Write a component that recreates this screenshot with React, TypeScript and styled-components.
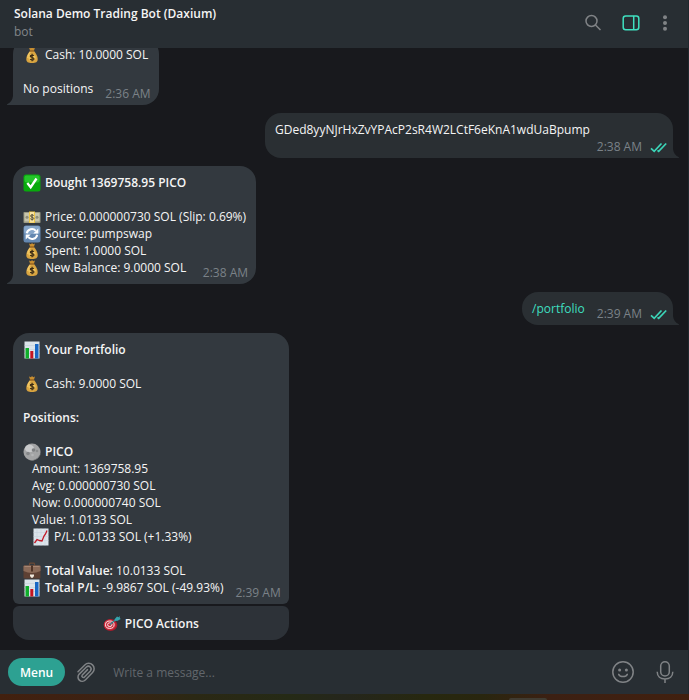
import React, { ReactNode } from 'react';
import styled, { createGlobalStyle, css } from 'styled-components';

const Global = createGlobalStyle`
  *, *::before, *::after { box-sizing: border-box; }
  body {
    margin: 0;
    background: #18191d;
    color: #f5f5f5;
    font: 12px/17px "Open Sans", "Noto Sans", sans-serif;
  }
  button, input { font: inherit; }
`;

const Desktop = styled.div`
  display: flex;
  flex-direction: column;
  height: 100vh;
  overflow: hidden;
`;

const Window = styled.main`
  display: flex;
  flex: 1;
  flex-direction: column;
  min-height: 0;
  border-right: 1px solid #20282e;
`;

const Header = styled.header`
  display: flex;
  flex: none;
  align-items: center;
  justify-content: space-between;
  height: 48px;
  padding: 0 12px 2px 14px;
  background: #282e33;
`;

const Title = styled.h1`
  margin: 0;
  font-size: 12px;
  line-height: 18px;
  font-weight: 600;
`;

const Subtitle = styled.p`
  margin: 0;
  line-height: 18px;
  color: #82868a;
`;

const Tools = styled.div`
  display: flex;
  align-items: center;
  gap: 8px;
`;

const IconButton = styled.button<{ $wide?: boolean; $accent?: boolean }>`
  display: flex;
  flex: none;
  align-items: center;
  justify-content: center;
  width: ${(p) => (p.$wide ? 30 : 22)}px;
  height: 30px;
  padding: 0;
  border: 0;
  background: none;
  color: ${(p) => (p.$accent ? '#3fe0c0' : '#808386')};
  cursor: pointer;
`;

const Chat = styled.section`
  display: flex;
  flex: 1;
  flex-direction: column;
  justify-content: flex-end;
  gap: 8px;
  min-height: 0;
  padding: 0 15px 10px 13px;
  overflow: hidden;
`;

const Bubble = styled.article<{ $own?: boolean; $joined?: boolean }>`
  position: relative;
  flex: none;
  align-self: ${(p) => (p.$own ? 'flex-end' : 'flex-start')};
  padding: 8px ${(p) => (p.$own ? 6 : 10)}px 8px 10px;
  background: ${(p) => (p.$own ? '#2a2f33' : '#33393f')};
  border-radius: ${(p) =>
    p.$joined ? '16px 16px 6px 6px' : p.$own ? '16px 16px 0 16px' : '16px 16px 16px 0'};
`;

const HashBubble = styled(Bubble)`
  min-width: 408px;
`;

const Tail = styled.svg<{ $own?: boolean }>`
  position: absolute;
  bottom: 0;
  ${(p) => (p.$own ? css`left: 100%; transform: scaleX(-1);` : css`right: 100%;`)}
  fill: ${(p) => (p.$own ? '#2a2f33' : '#33393f')};
`;

const Line = styled.div<{ $indent?: boolean; $bold?: boolean }>`
  display: flex;
  align-items: center;
  height: 17px;
  padding-left: ${(p) => (p.$indent ? 9 : 0)}px;
  font-weight: ${(p) => (p.$bold ? 600 : 400)};
  white-space: pre;
`;

const LastLine = styled.div`
  display: flex;
  align-items: flex-end;
  justify-content: space-between;
  gap: 12px;
`;

const Stamp = styled.span<{ $own?: boolean }>`
  display: flex;
  align-items: center;
  gap: 8px;
  height: 17px;
  margin: 0 ${(p) => (p.$own ? 0 : -2)}px -5px auto;
  color: #7b8288;
  white-space: nowrap;
`;

const Command = styled.a`
  color: #3fdfc0;
  text-decoration: none;
`;

const EmojiBox = styled.svg`
  flex: none;
  width: 18px;
  height: 18px;
  margin-right: 4px;
`;

const Card = styled.div`
  display: flex;
  flex: none;
  flex-direction: column;
  align-self: flex-start;
  gap: 2px;
`;

const WideBubble = styled(Bubble)`
  align-self: stretch;
`;

const ActionButton = styled.button`
  display: flex;
  align-items: center;
  justify-content: center;
  height: 34px;
  padding: 0;
  border: 0;
  border-radius: 6px 6px 16px 16px;
  background: #2d3238;
  color: #f5f5f5;
  font-weight: 600;
  cursor: pointer;
`;

const Composer = styled.form`
  display: flex;
  flex: none;
  align-items: center;
  height: 44px;
  padding: 0 8px;
  background: #282e33;
`;

const MenuButton = styled.button`
  flex: none;
  height: 28px;
  margin-right: 10px;
  padding: 0 12px;
  border: 0;
  border-radius: 14px;
  background: #2da192;
  color: #fff;
  font-weight: 600;
  cursor: pointer;
`;

const MessageInput = styled.input`
  flex: 1;
  min-width: 0;
  height: 30px;
  padding: 0 0 0 16px;
  border: 0;
  outline: 0;
  background: none;
  color: #f5f5f5;
  &::placeholder { color: #62676c; opacity: 1; }
`;

const ComposerTools = styled.div`
  display: flex;
  gap: 12px;
`;

const Taskbar = styled.div`
  display: flex;
  flex: none;
  justify-content: flex-end;
  height: 6px;
  padding: 4px 142px 0 0;
  background: linear-gradient(90deg, #42200f 0%, #3c2213 15%, #2b2814 28%, #252a16 42%, #25261c 50%, #27280f 62%, #29260f 70%, #3c2013 80%, #41200f 100%);
`;

const TaskbarTab = styled.span`
  width: 38px;
  height: 2px;
  border-radius: 2px 2px 0 0;
  background: #403b31;
`;

type EmojiName = 'bag' | 'check' | 'cash' | 'sync' | 'bars' | 'moon' | 'trend' | 'case' | 'target';

const emojiArt: Record<EmojiName, ReactNode> = {
  bag: (
    <>
      <path d="M6 1.500 8 2.200l1-1.200 1.200 1.200L12 1.500 10.800 5H7.200z" fill="#c98f31" />
      <path d="M7 5h4c1.800 2 3.700 5 3.700 8 0 3-1.700 4-5.700 4s-5.700-1-5.700-4c0-3 1.900-6 3.700-8z" fill="#d9a440" />
      <path d="M7.200 6.200C5.600 8 4.800 10 4.800 12" fill="none" stroke="#f4cc6c" strokeWidth="1.200" />
      <path d="M6.700 5h4.600" stroke="#8a5a1f" strokeWidth="1.200" />
      <circle cx="9" cy="11.500" r="3.600" fill="#f0c45a" />
      <path d="M11 9.700C10.300 8.800 7.300 8.700 7.300 10.200c0 1.600 3.700 1 3.700 2.700 0 1.500-3 1.500-3.900.300M9.100 7.800v7.400" fill="none" stroke="#3b2a14" strokeWidth="1.200" />
    </>
  ),
  check: (
    <>
      <rect x=".5" y=".5" width="17" height="17" rx="2.500" fill="#08a90c" />
      <rect x="1.500" y="1.500" width="15" height="7" rx="2" fill="#25c52a" />
      <path d="m4.300 9 3.400 4.200L13.500 4.500" fill="none" stroke="#fff" strokeWidth="2.300" />
    </>
  ),
  cash: (
    <>
      <rect x=".5" y="4" width="17" height="11" rx=".8" fill="#9b9a83" />
      <rect x="1.500" y="5" width="15" height="8.500" fill="#c7c5ac" />
      <circle cx="4" cy="9.300" r="1.500" fill="#8e8d79" />
      <circle cx="14" cy="9.300" r="1.500" fill="#8e8d79" />
      <path d="M6 3.500h6V15H6z" fill="#edc443" />
      <path d="M7 4h4v10.500H7z" fill="#f8e2a0" />
      <path d="M10.700 7.500C10 6.700 7.500 6.600 7.500 8c0 1.500 3.300 1 3.300 2.400 0 1.400-2.700 1.300-3.500.300M9.100 6v6.500" fill="none" stroke="#55503d" strokeWidth="1" />
    </>
  ),
  sync: (
    <>
      <rect x=".5" y=".5" width="17" height="17" rx="2.500" fill="#6488b1" />
      <rect x="1" y="1" width="16" height="8" rx="2.300" fill="#86a6c9" />
      <path d="M3.800 8.300a5.200 5.200 0 0 1 9-2.500M14.200 9.700a5.200 5.200 0 0 1-9 2.500" fill="none" stroke="#fff" strokeWidth="2" />
      <path d="M15.300 3.500v5h-5zM2.700 14.500v-5h5z" fill="#fff" />
    </>
  ),
  bars: (
    <>
      <rect x="1.500" y=".5" width="15" height="17" fill="#dbe4ea" />
      <path d="M1.500 4.500h15M1.500 8.500h15M1.500 12.500h15" stroke="#bccad4" strokeWidth=".5" />
      <path d="M2.500 7h3.500v10.500H2.500z" fill="#10ae2b" />
      <path d="M7.300 10h3v7.500h-3z" fill="#c51420" />
      <path d="M12 3h3.500v14.500H12z" fill="#1767c5" />
    </>
  ),
  moon: (
    <>
      <circle cx="9" cy="9" r="8.500" fill="#a3a4a5" />
      <path d="M14 2a8.500 8.500 0 0 1-9.500 14.200C10 19 17.500 15 17.500 9 17.500 6 16 3.500 14 2z" fill="#737577" />
      <ellipse cx="6.500" cy="5.500" rx="4.500" ry="3.800" fill="#c9cacb" />
      <circle cx="10.500" cy="7" r="1.800" fill="#7e8082" />
      <circle cx="5" cy="10.500" r="1.800" fill="#858789" />
      <circle cx="9.500" cy="12" r="1.300" fill="#b4b5b6" />
      <circle cx="14" cy="8" r="1.300" fill="#8b8d8e" />
    </>
  ),
  trend: (
    <>
      <rect x="1.500" y=".5" width="15" height="17" fill="#dce4eb" />
      <path d="M1.500 4.500h15M1.500 8.500h15M1.500 12.500h15M5 .5v17M9 .5v17M13 .5v17" stroke="#c5d1da" strokeWidth=".5" />
      <path d="m2.500 15 2.500-3.500 2.500 1 2.500.500 2-5L13.500 6l1.500-3.500" fill="none" stroke="#c31927" strokeWidth="1.300" />
    </>
  ),
  case: (
    <>
      <path d="M6.500 3.500V2Q6.500 1.200 7.500 1.200h3Q11.500 1.200 11.500 2v1.500" fill="none" stroke="#6b4936" strokeWidth="1.200" />
      <path d="M1.500 3.500h15q1 0 1 1v11q0 1-1 1h-15q-1 0-1-1v-11q0-1 1-1z" fill="#5d4033" />
      <path d="M1.500 3.500h15q1 0 1 1V9Q9 13 .5 9V4.500q0-1 1-1z" fill="#8a6a58" />
      <path d="M1.500 4.500h15" stroke="#a78572" strokeWidth="1" />
      <path d="M8 3.500h2V9.500H8z" fill="#4f3427" />
      <path d="M7 12.500h4v1.500L9.800 15.800H8.200L7 14z" fill="#efe7dc" />
    </>
  ),
  target: (
    <>
      <ellipse cx="7.500" cy="11" rx="6.800" ry="5.900" fill="#a91b2b" />
      <ellipse cx="6.800" cy="10.700" rx="6" ry="5.200" fill="#d02a3c" />
      <ellipse cx="6.800" cy="10.700" rx="4.300" ry="3.700" fill="none" stroke="#f4e8e7" strokeWidth="1" />
      <ellipse cx="6.800" cy="10.700" rx="2.200" ry="1.900" fill="none" stroke="#f4e8e7" strokeWidth="1" />
      <path d="m7 10.500 6.500-5.500" stroke="#327e89" strokeWidth="1.400" />
      <path d="m11.500 5.500 2.500-3 1.500.7L17 2l-.3 1.800 1 1.200-3 1.800-3 .2z" fill="#35a4ad" />
    </>
  ),
};

const Emoji = ({ name }: { name: EmojiName }) => (
  <EmojiBox viewBox="0 0 18 18" aria-hidden="true">
    {emojiArt[name]}
  </EmojiBox>
);

const Corner = ({ own }: { own?: boolean }) => (
  <Tail $own={own} width="6" height="9" viewBox="0 0 6 9" aria-hidden="true">
    <path d="M6 0v9H.5C-.2 9-.2 8.300.5 8 3.500 6.500 5.500 4 6 0z" />
  </Tail>
);

const Checks = () => (
  <svg width="17" height="12" viewBox="0 0 17 12" fill="none" stroke="#3bd5b8" strokeWidth="1.700" aria-label="Read">
    <path d="m1 7.300 3.200 3L11.500 2.500M7.500 9.300l1.200 1L16.200 2.500" />
  </svg>
);

const SearchIcon = () => (
  <svg width="18" height="18" viewBox="0 0 18 18" fill="none" stroke="currentColor" strokeWidth="1.500">
    <circle cx="7.500" cy="7" r="5.500" />
    <path d="m11.500 11 5 5" />
  </svg>
);

const PanelIcon = () => (
  <svg width="18" height="18" viewBox="0 0 18 18" fill="none" stroke="currentColor" strokeWidth="1.500">
    <rect x="1.200" y="2" width="15.600" height="13.800" rx="2.500" />
    <path d="M11.700 2v13.800" />
  </svg>
);

const DotsIcon = () => (
  <svg width="6" height="18" viewBox="0 0 6 18" fill="currentColor">
    <circle cx="3" cy="3.200" r="2" />
    <circle cx="3" cy="9" r="2" />
    <circle cx="3" cy="14.800" r="2" />
  </svg>
);

const ClipIcon = () => (
  <svg width="20" height="22" viewBox="0 0 20 22" fill="none" stroke="currentColor" strokeWidth="1.500" strokeLinecap="round">
    <path d="M2 10.800 8.800 4a5.400 5.400 0 0 1 7.800 7.600L9.300 19a4.200 4.200 0 0 1-6.100-5.900L10.400 6a2.800 2.800 0 0 1 4 3.900L8.500 16a1.500 1.500 0 0 1-2.200-2.100L11.500 8.600" />
  </svg>
);

const SmileIcon = () => (
  <svg width="24" height="24" viewBox="0 0 24 24" fill="none" stroke="currentColor" strokeWidth="1.500">
    <circle cx="12" cy="12" r="10.200" />
    <path d="M7.700 14.300c1.500 3 7.100 3 8.600 0" strokeLinecap="round" />
    <circle cx="8.600" cy="10" r="1.500" fill="currentColor" stroke="none" />
    <circle cx="15.400" cy="10" r="1.500" fill="currentColor" stroke="none" />
  </svg>
);

const MicIcon = () => (
  <svg width="18" height="24" viewBox="0 0 18 24" fill="none" stroke="currentColor" strokeWidth="1.500">
    <rect x="4.700" y="1.700" width="8.600" height="14.300" rx="4.300" />
    <path d="M1.200 11.800c0 4.600 3.300 7.200 7.800 7.200s7.800-2.600 7.800-7.200M9 19v4" />
  </svg>
);

export default function App() {
  return (
    <Desktop>
      <Global />
      <Window>
        <Header>
          <div>
            <Title>Solana Demo Trading Bot (Daxium)</Title>
            <Subtitle>bot</Subtitle>
          </div>
          <Tools>
            <IconButton $wide aria-label="Search"><SearchIcon /></IconButton>
            <IconButton $wide $accent aria-label="Side panel"><PanelIcon /></IconButton>
            <IconButton aria-label="More"><DotsIcon /></IconButton>
          </Tools>
        </Header>

        <Chat>
          <Bubble>
            <Line><Emoji name="bag" />Cash: 10.0000 SOL</Line>
            <Line />
            <LastLine>
              <Line>No positions</Line>
              <Stamp>2:36 AM</Stamp>
            </LastLine>
            <Corner />
          </Bubble>

          <HashBubble $own>
            <Line>GDed8yyNJrHxZvYPAcP2sR4W2LCtF6eKnA1wdUaBpump</Line>
            <LastLine>
              <Stamp $own>2:38 AM <Checks /></Stamp>
            </LastLine>
            <Corner own />
          </HashBubble>

          <Bubble>
            <Line $bold><Emoji name="check" />Bought 1369758.95 PICO</Line>
            <Line />
            <Line><Emoji name="cash" />Price: 0.000000730 SOL (Slip: 0.69%)</Line>
            <Line><Emoji name="sync" />Source: pumpswap</Line>
            <Line><Emoji name="bag" />Spent: 1.0000 SOL</Line>
            <LastLine>
              <Line><Emoji name="bag" />New Balance: 9.0000 SOL</Line>
              <Stamp>2:38 AM</Stamp>
            </LastLine>
            <Corner />
          </Bubble>

          <Bubble $own>
            <LastLine>
              <Line><Command href="#portfolio">/portfolio</Command></Line>
              <Stamp $own>2:39 AM <Checks /></Stamp>
            </LastLine>
            <Corner own />
          </Bubble>

          <Card>
            <WideBubble $joined>
              <Line $bold><Emoji name="bars" />Your Portfolio</Line>
              <Line />
              <Line><Emoji name="bag" />Cash: 9.0000 SOL</Line>
              <Line />
              <Line $bold>Positions:</Line>
              <Line />
              <Line $bold><Emoji name="moon" />PICO</Line>
              <Line $indent>Amount: 1369758.95</Line>
              <Line $indent>Avg: 0.000000730 SOL</Line>
              <Line $indent>Now: 0.000000740 SOL</Line>
              <Line $indent>Value: 1.0133 SOL</Line>
              <Line $indent><Emoji name="trend" />P/L: 0.0133 SOL (+1.33%)</Line>
              <Line />
              <Line><Emoji name="case" /><Line as="b" $bold>Total Value: </Line>10.0133 SOL</Line>
              <LastLine>
                <Line><Emoji name="bars" /><Line as="b" $bold>Total P/L: </Line>-9.9867 SOL (-49.93%)</Line>
                <Stamp>2:39 AM</Stamp>
              </LastLine>
            </WideBubble>
            <ActionButton><Emoji name="target" />PICO Actions</ActionButton>
          </Card>
        </Chat>

        <Composer onSubmit={(e) => e.preventDefault()}>
          <MenuButton type="button">Menu</MenuButton>
          <IconButton type="button" aria-label="Attach file"><ClipIcon /></IconButton>
          <MessageInput aria-label="Message" placeholder="Write a message..." />
          <ComposerTools>
            <IconButton type="button" $wide aria-label="Emoji"><SmileIcon /></IconButton>
            <IconButton type="button" $wide aria-label="Record voice message"><MicIcon /></IconButton>
          </ComposerTools>
        </Composer>
      </Window>
      <Taskbar><TaskbarTab /></Taskbar>
    </Desktop>
  );
}
